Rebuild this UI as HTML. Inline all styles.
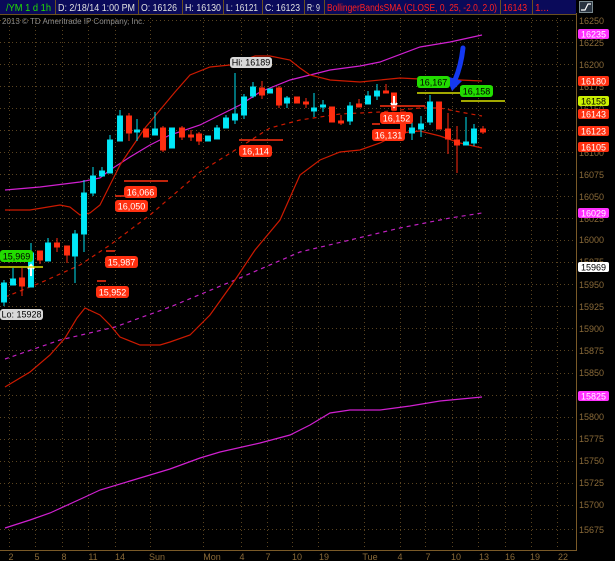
<!DOCTYPE html>
<html><head><meta charset="utf-8"><style>
html,body{margin:0;padding:0;background:#000;width:615px;height:561px;overflow:hidden}
svg{display:block}
text{font-family:"Liberation Sans",sans-serif}
</style></head><body>
<svg width="615" height="561" viewBox="0 0 615 561" xmlns="http://www.w3.org/2000/svg">
<rect width="615" height="561" fill="#000"/>
<!-- grid -->
<g stroke="#5a4420" stroke-width="1" stroke-dasharray="1,3">
<line x1="0" y1="20.5" x2="576" y2="20.5"/><line x1="0" y1="42.5" x2="576" y2="42.5"/><line x1="0" y1="64.5" x2="576" y2="64.5"/><line x1="0" y1="86.5" x2="576" y2="86.5"/><line x1="0" y1="108.5" x2="576" y2="108.5"/><line x1="0" y1="130.5" x2="576" y2="130.5"/><line x1="0" y1="152.5" x2="576" y2="152.5"/><line x1="0" y1="174.5" x2="576" y2="174.5"/><line x1="0" y1="196.5" x2="576" y2="196.5"/><line x1="0" y1="218.5" x2="576" y2="218.5"/><line x1="0" y1="240.5" x2="576" y2="240.5"/><line x1="0" y1="262.5" x2="576" y2="262.5"/><line x1="0" y1="284.5" x2="576" y2="284.5"/><line x1="0" y1="306.5" x2="576" y2="306.5"/><line x1="0" y1="328.5" x2="576" y2="328.5"/><line x1="0" y1="350.5" x2="576" y2="350.5"/><line x1="0" y1="373.5" x2="576" y2="373.5"/><line x1="0" y1="395.5" x2="576" y2="395.5"/><line x1="0" y1="417.5" x2="576" y2="417.5"/><line x1="0" y1="439.5" x2="576" y2="439.5"/><line x1="0" y1="461.5" x2="576" y2="461.5"/><line x1="0" y1="483.5" x2="576" y2="483.5"/><line x1="0" y1="505.5" x2="576" y2="505.5"/><line x1="0" y1="529.5" x2="576" y2="529.5"/>
<line x1="9.5" y1="14" x2="9.5" y2="550"/><line x1="35.5" y1="14" x2="35.5" y2="550"/><line x1="62.5" y1="14" x2="62.5" y2="550"/><line x1="88.5" y1="14" x2="88.5" y2="550"/><line x1="115.5" y1="14" x2="115.5" y2="550"/><line x1="150.5" y1="14" x2="150.5" y2="550"/><line x1="203.5" y1="14" x2="203.5" y2="550"/><line x1="241.5" y1="14" x2="241.5" y2="550"/><line x1="267.5" y1="14" x2="267.5" y2="550"/><line x1="292.5" y1="14" x2="292.5" y2="550"/><line x1="318.5" y1="14" x2="318.5" y2="550"/><line x1="364.5" y1="14" x2="364.5" y2="550"/><line x1="400.5" y1="14" x2="400.5" y2="550"/><line x1="425.5" y1="14" x2="425.5" y2="550"/><line x1="452.5" y1="14" x2="452.5" y2="550"/><line x1="478.5" y1="14" x2="478.5" y2="550"/><line x1="505.5" y1="14" x2="505.5" y2="550"/><line x1="531.5" y1="14" x2="531.5" y2="550"/><line x1="557.5" y1="14" x2="557.5" y2="550"/>
</g>
<!-- axes -->
<line x1="576.5" y1="13" x2="576.5" y2="551" stroke="#7a5a28"/>
<line x1="0" y1="550.5" x2="577" y2="550.5" stroke="#7a5a28"/>
<g fill="#8a6a38" font-size="9">
<text x="579" y="24">16250</text><text x="579" y="46">16225</text><text x="579" y="68">16200</text><text x="579" y="90">16175</text><text x="579" y="112">16150</text><text x="579" y="134">16125</text><text x="579" y="156">16100</text><text x="579" y="178">16075</text><text x="579" y="200">16050</text><text x="579" y="222">16025</text><text x="579" y="243">16000</text><text x="579" y="265">15975</text><text x="579" y="288">15950</text><text x="579" y="310">15925</text><text x="579" y="332">15900</text><text x="579" y="354">15875</text><text x="579" y="376">15850</text><text x="579" y="398">15825</text><text x="579" y="420">15800</text><text x="579" y="442">15775</text><text x="579" y="464">15750</text><text x="579" y="486">15725</text><text x="579" y="508">15700</text><text x="579" y="533">15675</text>
</g>
<g fill="#8a6a38" font-size="9" text-anchor="middle">
<text x="11" y="560">2</text><text x="37" y="560">5</text><text x="64" y="560">8</text><text x="93" y="560">11</text><text x="120" y="560">14</text><text x="157" y="560">Sun</text><text x="212" y="560">Mon</text><text x="242" y="560">4</text><text x="268" y="560">7</text><text x="297" y="560">10</text><text x="324" y="560">19</text><text x="370" y="560">Tue</text><text x="400" y="560">4</text><text x="428" y="560">7</text><text x="456" y="560">10</text><text x="484" y="560">13</text><text x="510" y="560">16</text><text x="535" y="560">19</text><text x="563" y="560">22</text>
</g>
<text x="2" y="24" fill="#8a8a8a" font-size="8">2013 © TD Ameritrade IP Company, Inc.</text>
<!-- lines -->
<g fill="none" stroke-width="1.2">
<polyline stroke="#d020d0" points="5,190 40,187 80,182 100,178 110,170 130,157 150,145 170,135 200,125 220,115 240,105 260,92 290,80 330,70 360,66 380,62 420,47 450,42 482,35"/>
<polyline stroke="#c020c0" stroke-dasharray="4,4" points="5,359 60,340 115,327 170,307 235,280 300,252 350,240 400,228 450,218 482,213"/>
<polyline stroke="#d020d0" points="5,528 30,520 50,513 85,497 100,490 130,481 150,475 170,469 200,458 220,452 260,443 290,435 310,425 330,413 350,410 380,410 410,406 440,401 482,397"/>
<polyline stroke="#cc1a00" points="5,210 30,210 60,205 70,207 80,215 90,213 100,205 110,185 120,165 130,150 145,128 160,110 175,92 190,75 210,67 230,65 255,56 270,56 290,60 300,68 310,75 330,80 360,82 400,78 440,80 460,80 482,81"/>
<polyline stroke="#cc1a00" points="5,387 30,372 50,355 65,338 77,318 85,308 100,315 110,325 120,337 140,345 160,345 170,342 190,335 210,315 235,280 255,250 280,220 300,175 320,160 340,152 360,150 380,143 400,133 420,131 440,136 460,143 482,148"/>
<polyline stroke="#cc1a00" stroke-dasharray="4,4" points="5,297 40,283 80,265 110,245 150,215 200,172 240,147 270,128 300,120 340,114 380,112 420,108 440,108 460,112 482,116"/>
</g>
<!-- candles -->
<g stroke-width="1">
<g stroke="#00e0f0" fill="#00e8f8">
<line x1="4" y1="280" x2="4" y2="306"/><rect x="1.5" y="283" width="5" height="19"/>
<line x1="13" y1="268" x2="13" y2="285"/><rect x="10.5" y="279" width="5" height="6"/>
<line x1="31" y1="243" x2="31" y2="287"/><rect x="28.5" y="253" width="5" height="34"/>
<line x1="48" y1="238" x2="48" y2="261"/><rect x="45.5" y="243" width="5" height="18"/>
<line x1="75" y1="230" x2="75" y2="283"/><rect x="72.5" y="234" width="5" height="22"/>
<line x1="84" y1="180" x2="84" y2="252"/><rect x="81.5" y="193" width="5" height="41"/>
<line x1="93" y1="167" x2="93" y2="196"/><rect x="90.5" y="176" width="5" height="17"/>
<line x1="102" y1="167" x2="102" y2="177"/><rect x="99.5" y="171" width="5" height="5"/>
<line x1="110" y1="135" x2="110" y2="173"/><rect x="107.5" y="140" width="5" height="33"/>
<line x1="120" y1="110" x2="120" y2="141"/><rect x="117.5" y="116" width="5" height="25"/>
<line x1="137" y1="119" x2="137" y2="141"/><rect x="134.5" y="130" width="5" height="2"/>
<line x1="155" y1="112" x2="155" y2="135"/><rect x="152.5" y="129" width="5" height="6"/>
<rect x="169.5" y="128" width="5" height="20"/>
<rect x="205.5" y="136" width="5" height="5"/>
<line x1="217" y1="125" x2="217" y2="139"/><rect x="214.5" y="128" width="5" height="11"/>
<line x1="226" y1="115" x2="226" y2="128"/><rect x="223.5" y="118" width="5" height="10"/>
<line x1="235" y1="73" x2="235" y2="124"/><rect x="232.5" y="114" width="5" height="6"/>
<line x1="244" y1="94" x2="244" y2="119"/><rect x="241.5" y="97" width="5" height="18"/>
<line x1="253" y1="82" x2="253" y2="98"/><rect x="250.5" y="87" width="5" height="9"/>
<rect x="267.5" y="89" width="5" height="4"/>
<line x1="287" y1="96" x2="287" y2="108"/><rect x="284.5" y="98" width="5" height="5"/>
<line x1="314" y1="93" x2="314" y2="117"/><rect x="311.5" y="108" width="5" height="3"/>
<line x1="323" y1="100" x2="323" y2="112"/><rect x="320.5" y="105" width="5" height="2"/>
<line x1="350" y1="102" x2="350" y2="125"/><rect x="347.5" y="106" width="5" height="15"/>
<line x1="368" y1="91" x2="368" y2="104"/><rect x="365.5" y="96" width="5" height="8"/>
<line x1="377" y1="84" x2="377" y2="100"/><rect x="374.5" y="91" width="5" height="5"/>
<line x1="412" y1="122" x2="412" y2="140"/><rect x="409.5" y="128" width="5" height="5"/>
<line x1="421" y1="116" x2="421" y2="137"/><rect x="418.5" y="124" width="5" height="5"/>
<line x1="430" y1="95" x2="430" y2="125"/><rect x="427.5" y="102" width="5" height="20"/>
<line x1="466" y1="117" x2="466" y2="145"/><rect x="463.5" y="142" width="5" height="3"/>
<line x1="474" y1="124" x2="474" y2="146"/><rect x="471.5" y="129" width="5" height="14"/>
</g>
<g stroke="#ff2a10" fill="#ff3010">
<line x1="22" y1="268" x2="22" y2="296"/><rect x="19.5" y="278" width="5" height="8"/>
<line x1="40" y1="251" x2="40" y2="264"/><rect x="37.5" y="251" width="5" height="9"/>
<line x1="57" y1="238" x2="57" y2="252"/><rect x="54.5" y="243" width="5" height="4"/>
<line x1="67" y1="246" x2="67" y2="263"/><rect x="64.5" y="246" width="5" height="9"/>
<line x1="129" y1="113" x2="129" y2="141"/><rect x="126.5" y="116" width="5" height="17"/>
<rect x="143.5" y="129" width="5" height="8"/>
<line x1="163" y1="126" x2="163" y2="152"/><rect x="160.5" y="128" width="5" height="22"/>
<line x1="182" y1="126" x2="182" y2="140"/><rect x="179.5" y="128" width="5" height="9"/>
<line x1="191" y1="130" x2="191" y2="141"/><rect x="188.5" y="135" width="5" height="2"/>
<line x1="199" y1="132" x2="199" y2="145"/><rect x="196.5" y="134" width="5" height="7"/>
<line x1="262" y1="81" x2="262" y2="99"/><rect x="259.5" y="88" width="5" height="7"/>
<line x1="279" y1="86" x2="279" y2="108"/><rect x="276.5" y="88" width="5" height="17"/>
<rect x="294.5" y="97" width="5" height="6"/>
<line x1="306" y1="98" x2="306" y2="108"/><rect x="303.5" y="102" width="5" height="2"/>
<rect x="329.5" y="107" width="5" height="15"/>
<line x1="341" y1="115" x2="341" y2="125"/><rect x="338.5" y="121" width="5" height="2"/>
<line x1="359" y1="99" x2="359" y2="107"/><rect x="356.5" y="104" width="5" height="3"/>
<line x1="386" y1="84" x2="386" y2="93"/><rect x="383.5" y="91" width="5" height="2"/>
<rect x="391.5" y="93" width="5" height="17"/>
<rect x="400.5" y="112" width="5" height="21"/>
<rect x="436.5" y="102" width="5" height="27"/>
<line x1="448" y1="113" x2="448" y2="154"/><rect x="445.5" y="129" width="5" height="10"/>
<line x1="457" y1="126" x2="457" y2="173"/><rect x="454.5" y="140" width="5" height="5"/>
<line x1="483" y1="126" x2="483" y2="134"/><rect x="480.5" y="129" width="5" height="3"/>
</g>
</g>
<!-- white arrows -->
<path d="M31 276 V266 M28 269 L31 265 L34 269" stroke="#fff" stroke-width="2" fill="none"/>
<path d="M394 96 V106 M391 103 L394 107 L397 103" stroke="#fff" stroke-width="2" fill="none"/>
<!-- yellow lines -->
<g stroke="#d8e000" stroke-width="1.5">
<line x1="0" y1="267" x2="43" y2="267"/><line x1="417" y1="93" x2="460" y2="93"/><line x1="461" y1="101" x2="505" y2="101"/>
</g>
<!-- red marker lines -->
<g stroke="#ff3010" stroke-width="1.5">
<line x1="124" y1="181" x2="168" y2="181"/><line x1="115" y1="196" x2="124" y2="196"/><line x1="106" y1="251" x2="115" y2="251"/><line x1="97" y1="281" x2="106" y2="281"/><line x1="239" y1="140" x2="283" y2="140"/><line x1="380" y1="106" x2="425" y2="106"/><line x1="372" y1="124" x2="380" y2="124"/>
</g>
<!-- blue arrow -->
<path d="M463 48 Q461 66 455 80" stroke="#1438f0" stroke-width="5" fill="none" stroke-linecap="round"/>
<path d="M446 76 L462 81 L452 91 Z" fill="#1438f0"/>
<!-- chart labels -->
<g font-size="9" text-anchor="middle">
<rect x="124" y="186" width="33" height="12" rx="3" fill="#ff3010"/><text x="140.5" y="195.5" fill="#fff">16,066</text>
<rect x="115" y="200" width="33" height="12" rx="3" fill="#ff3010"/><text x="131.5" y="209.5" fill="#fff">16,050</text>
<rect x="105" y="256" width="33" height="12" rx="3" fill="#ff3010"/><text x="121.5" y="265.5" fill="#fff">15,987</text>
<rect x="96" y="286" width="33" height="12" rx="3" fill="#ff3010"/><text x="112.5" y="295.5" fill="#fff">15,952</text>
<rect x="239" y="145" width="33" height="12" rx="3" fill="#ff3010"/><text x="255.5" y="154.5" fill="#fff">16,114</text>
<rect x="380" y="112" width="33" height="12" rx="3" fill="#ff3010"/><text x="396.5" y="121.5" fill="#fff">16,152</text>
<rect x="372" y="129" width="33" height="12" rx="3" fill="#ff3010"/><text x="388.5" y="138.5" fill="#fff">16,131</text>
<rect x="0" y="250" width="33" height="12" rx="3" fill="#22dd00"/><text x="16.5" y="259.5" fill="#000">15,969</text>
<rect x="417" y="76" width="33" height="12" rx="3" fill="#22dd00"/><text x="433.5" y="85.5" fill="#000">16,167</text>
<rect x="460" y="85" width="33" height="12" rx="3" fill="#22dd00"/><text x="476.5" y="94.5" fill="#000">16,158</text>
<rect x="230" y="57" width="42" height="11" rx="3" fill="#d8d8d8"/><text x="251" y="65.5" fill="#000">Hi: 16189</text>
<rect x="0" y="309" width="43" height="11" rx="3" fill="#d8d8d8"/><text x="21.5" y="317.5" fill="#000">Lo: 15928</text>
</g>
<!-- right axis labels -->
<g font-size="9" text-anchor="middle">
<rect x="578" y="29" width="31" height="10" rx="2" fill="#ff30ff"/><text x="593.5" y="37.5" fill="#fff">16235</text>
<rect x="578" y="76" width="31" height="10" rx="2" fill="#ff3010"/><text x="593.5" y="84.5" fill="#fff">16180</text>
<rect x="578" y="96" width="31" height="10" rx="2" fill="#ccf000"/><text x="593.5" y="104.5" fill="#000">16158</text>
<rect x="578" y="109" width="31" height="10" rx="2" fill="#ff3010"/><text x="593.5" y="117.5" fill="#fff">16143</text>
<rect x="578" y="126" width="31" height="10" rx="2" fill="#ff3010"/><text x="593.5" y="134.5" fill="#fff">16123</text>
<rect x="578" y="142" width="31" height="10" rx="2" fill="#ff3010"/><text x="593.5" y="150.5" fill="#fff">16105</text>
<rect x="578" y="208" width="31" height="10" rx="2" fill="#ff30ff"/><text x="593.5" y="216.5" fill="#fff">16029</text>
<rect x="578" y="262" width="31" height="10" rx="2" fill="#ffffff"/><text x="593.5" y="270.5" fill="#000">15969</text>
<rect x="578" y="391" width="31" height="10" rx="2" fill="#ff30ff"/><text x="593.5" y="399.5" fill="#fff">15825</text>
</g>
<!-- top bar -->
<rect x="0" y="0" width="576" height="14" fill="#0a0a5a"/>
<g stroke="#6a5020" stroke-width="1">
<line x1="55.5" y1="0" x2="55.5" y2="14"/><line x1="138.5" y1="0" x2="138.5" y2="14"/><line x1="182.5" y1="0" x2="182.5" y2="14"/><line x1="223.5" y1="0" x2="223.5" y2="14"/><line x1="262.5" y1="0" x2="262.5" y2="14"/><line x1="304.5" y1="0" x2="304.5" y2="14"/><line x1="324.5" y1="0" x2="324.5" y2="14"/><line x1="500.5" y1="0" x2="500.5" y2="14"/><line x1="532.5" y1="0" x2="532.5" y2="14"/>
<line x1="0" y1="14.5" x2="577" y2="14.5"/>
</g>
<g font-size="10" lengthAdjust="spacingAndGlyphs">
<text x="6" y="11" fill="#22e000" textLength="45" lengthAdjust="spacingAndGlyphs">/YM 1 d 1h</text>
<text x="58" y="11" fill="#e0e0e0" textLength="77" lengthAdjust="spacingAndGlyphs">D: 2/18/14 1:00 PM</text>
<text x="141" y="11" fill="#e0e0e0" textLength="36" lengthAdjust="spacingAndGlyphs">O: 16126</text>
<text x="185" y="11" fill="#e0e0e0" textLength="36" lengthAdjust="spacingAndGlyphs">H: 16130</text>
<text x="226" y="11" fill="#e0e0e0" textLength="32" lengthAdjust="spacingAndGlyphs">L: 16121</text>
<text x="265" y="11" fill="#e0e0e0" textLength="35" lengthAdjust="spacingAndGlyphs">C: 16123</text>
<text x="307" y="11" fill="#e0e0e0" textLength="13" lengthAdjust="spacingAndGlyphs">R: 9</text>
<text x="327" y="11" fill="#ff2020" textLength="170" lengthAdjust="spacingAndGlyphs">BollingerBandsSMA (CLOSE, 0, 25, -2.0, 2.0)</text>
<text x="503" y="11" fill="#ff2020" textLength="24" lengthAdjust="spacingAndGlyphs">16143</text>
<text x="535" y="11" fill="#ff2020">1...</text>
</g>
<rect x="579.5" y="1.5" width="13" height="11" fill="#2a3440" stroke="#7a8a90"/>
<path d="M581 10 H585 L588 4 H591" stroke="#fff" stroke-width="1.2" fill="none"/>
</svg>
</body></html>
